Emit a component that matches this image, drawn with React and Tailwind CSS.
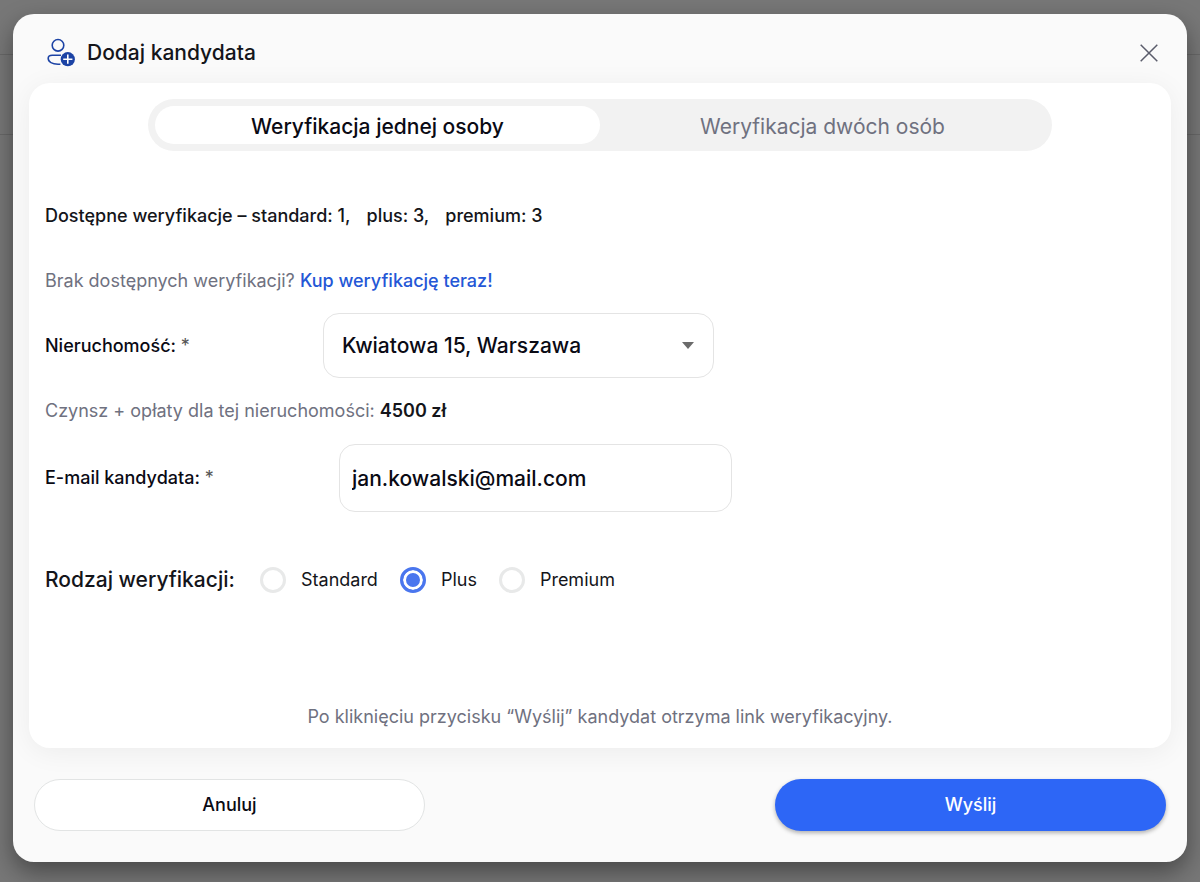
import { useState } from 'react';

const tabs = ['Weryfikacja jednej osoby', 'Weryfikacja dwóch osób'];
const kinds = ['Standard', 'Plus', 'Premium'];

const AddUserIcon = () => (
  <svg width="30" height="30" viewBox="0 0 30 30" fill="none" aria-hidden="true">
    <circle cx="11" cy="7.3" r="5.8" stroke="#1c43a5" strokeWidth="1.6" />
    <path d="M14 17.2H5.2C2.6 17.2 1.2 18.3 1.2 20.3c0 3.8 4.2 5.9 9.8 5.9h2.4" stroke="#1c43a5" strokeWidth="1.6" />
    <circle cx="20.8" cy="21.2" r="7.1" fill="#1c43a5" />
    <path d="M20.8 16.6v9.2M16.2 21.2h9.2" stroke="#fff" strokeWidth="1.6" />
  </svg>
);

const CloseIcon = () => (
  <svg width="18" height="18" viewBox="0 0 18 18" aria-hidden="true">
    <path d="M0.7 0.7l16.6 16.6M17.3 0.7L0.7 17.3" stroke="#5a5c6b" strokeWidth="1.5" />
  </svg>
);

const Tabs = ({ active, onChange }) => (
  <div role="tablist" className="mx-[103px] flex h-[52px] rounded-full bg-[#f2f2f2] p-[7px]">
    {tabs.map((tab, i) => (
      <button
        key={tab}
        type="button"
        role="tab"
        aria-selected={active === i}
        onClick={() => onChange(i)}
        className={`flex-1 rounded-full pt-[3px] text-[21px] ${active === i ? 'bg-white font-medium text-[#0a0a14]' : 'text-[#6f7180]'}`}
      >
        {tab}
      </button>
    ))}
  </div>
);

const App = () => {
  const [tab, setTab] = useState(0);
  const [kind, setKind] = useState('Plus');
  const [email, setEmail] = useState('jan.kowalski@mail.com');

  return (
    <div className="relative min-h-screen bg-[#777] px-[13px] pt-[14px] pb-[19px] font-['Inter',sans-serif] text-lg leading-[30px] text-[#14151a]">
      <div className="absolute inset-x-0 top-[54px] h-[81px] border-y border-[#686868]" />
      <form
        onSubmit={(e) => e.preventDefault()}
        className="relative rounded-[21px] bg-[#fafafa] shadow-[0_10px_24px_rgba(0,0,0,0.4)]"
      >
        <header className="flex h-[69px] items-center justify-between pt-2 pr-[29px] pl-[34px]">
          <div className="flex items-center gap-[10px]">
            <AddUserIcon />
            <h1 className="text-[21px] font-medium">Dodaj kandydata</h1>
          </div>
          <button type="button" aria-label="Zamknij"><CloseIcon /></button>
        </header>

        <main className="mx-4 rounded-[21px] bg-white px-4 py-4 shadow-[0_4px_28px_rgba(0,0,0,0.06)]">
          <Tabs active={tab} onChange={setTab} />

          <p className="mt-[50px] flex gap-4 font-medium">
            <span>Dostępne weryfikacje – standard: 1,</span>
            <span>plus: 3,</span>
            <span>premium: 3</span>
          </p>

          <p className="mt-[35px] text-[#6f7180]">
            Brak dostępnych weryfikacji?{' '}
            <a href="#kup" className="font-medium text-[#2457d6]">Kup weryfikację teraz!</a>
          </p>

          <div className="mt-[17px] flex items-center">
            <label htmlFor="property" className="w-[278px] font-medium text-[#0a0a14]">
              Nieruchomość: <span className="font-normal text-[#555]">*</span>
            </label>
            <div className="relative w-[391px]">
              <select id="property" className="h-[65px] w-full appearance-none rounded-2xl border border-[#e4e4e4] bg-white px-[18px] text-[21px] font-medium text-[#0a0a14]">
                <option>Kwiatowa 15, Warszawa</option>
              </select>
              <svg className="pointer-events-none absolute top-[29px] right-5" width="12" height="7" viewBox="0 0 12 7" aria-hidden="true">
                <path d="M0 0h12L6 7z" fill="#6b6b6b" />
              </svg>
            </div>
          </div>

          <p className="mt-[18px] text-[#6f7180]">
            Czynsz + opłaty dla tej nieruchomości: <strong className="font-semibold text-[#14151a]">4500 zł</strong>
          </p>

          <div className="mt-[18px] flex items-center">
            <label htmlFor="email" className="w-[294px] font-medium text-[#0a0a14]">
              E-mail kandydata: <span className="font-normal text-[#555]">*</span>
            </label>
            <input
              id="email"
              type="email"
              value={email}
              onChange={(e) => setEmail(e.target.value)}
              className="h-[68px] w-[393px] rounded-2xl border border-[#e4e4e4] bg-white px-3 text-[21px] font-medium text-[#0a0a14]"
            />
          </div>

          <fieldset className="mt-[53px] flex items-center">
            <legend className="float-left w-[215px] text-[21px] font-medium">Rodzaj weryfikacji:</legend>
            <div className="flex gap-[22px]">
              {kinds.map((name) => (
                <label key={name} className="flex items-center gap-[15px]">
                  <input
                    type="radio"
                    name="kind"
                    value={name}
                    checked={kind === name}
                    onChange={() => setKind(name)}
                    className="size-[26px] appearance-none rounded-full border-[3px] border-[#e8e9e9] bg-white checked:border-[#4a76ee] checked:bg-[#4a76ee] checked:shadow-[inset_0_0_0_3px_white]"
                  />
                  {name}
                </label>
              ))}
            </div>
          </fieldset>

          <p className="mt-[107px] text-center text-[#6f7180]">
            Po kliknięciu przycisku “Wyślij” kandydat otrzyma link weryfikacyjny.
          </p>
        </main>

        <footer className="flex items-center justify-between gap-4 px-[21px] py-[31px] font-medium">
          <button type="button" className="h-[52px] w-[391px] rounded-full border border-[#e2e4e4] bg-white text-[#0a0a14]">
            Anuluj
          </button>
          <button type="submit" className="h-[52px] w-[391px] rounded-full bg-[#2d66f6] text-white shadow-[0_2px_4px_rgba(0,0,0,0.3)]">
            Wyślij
          </button>
        </footer>
      </form>
    </div>
  );
};

export default App;
